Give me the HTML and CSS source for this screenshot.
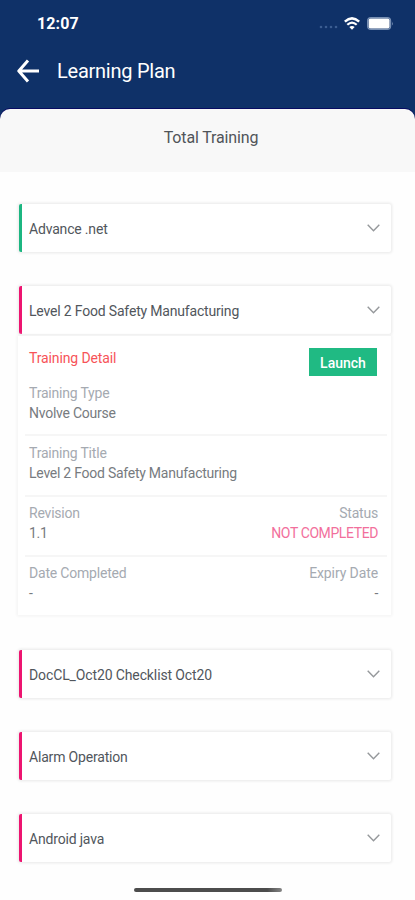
FILE: index.html
```html
<!DOCTYPE html>
<html lang="en">
<head>
<meta charset="utf-8">
<meta name="viewport" content="width=device-width, initial-scale=1">
<title>Learning Plan</title>
<link rel="stylesheet" href="styles.css">
</head>
<body>
<div class="app">
  <header class="header">
    <div class="status-bar">
      <span class="time">12:07</span>
      <div class="status-icons">
        <svg class="signal" width="19" height="4" viewBox="0 0 19 4"><g fill="#3b5d91"><circle cx="2" cy="2" r="1.3"/><circle cx="7" cy="2" r="1.3"/><circle cx="12" cy="2" r="1.3"/><circle cx="17" cy="2" r="1.3"/></g></svg>
        <svg class="wifi" width="16" height="13" viewBox="0 0 16 13"><g fill="none" stroke="#fff"><path d="M.8 4.7Q8-2 15.2 4.7" stroke-width="2.5"/><path d="M3.3 7.8Q8 3.4 12.7 7.8" stroke-width="2.2"/></g><path d="M5.3 10Q8 7.8 10.7 10L8 12.7Z" fill="#fff"/></svg>
        <svg class="battery" width="27" height="13" viewBox="0 0 27 13"><rect x=".6" y=".6" width="23" height="11.8" rx="3.4" fill="none" stroke="#7890b4" stroke-width="1.2"/><rect x="1.6" y="1.6" width="21" height="9.8" rx="2" fill="#fff"/><path d="M25 4.5q1.5 2 0 4z" fill="#7890b4"/></svg>
      </div>
    </div>
    <div class="nav">
      <svg class="back" width="23" height="24" viewBox="0 0 23 24"><path d="M22 12H2M11 1.5L1.8 12L11 22.5" fill="none" stroke="#fff" stroke-width="3" stroke-linejoin="round"/></svg>
      <h1 class="title">Learning Plan</h1>
    </div>
  </header>
  <div class="summary"><span>Total Training</span></div>
  <main class="list">
    <section class="card done"><h2>Advance .net</h2><svg class="chevron" viewBox="0 0 13 8"><path d="M.7.8L6.5 6.8L12.3.8"/></svg></section>
    <div class="group">
      <section class="card"><h2>Level 2 Food Safety Manufacturing</h2><svg class="chevron" viewBox="0 0 13 8"><path d="M.7.8L6.5 6.8L12.3.8"/></svg></section>
      <div class="detail">
        <div class="row first">
          <div class="top"><h3>Training Detail</h3><button class="launch">Launch</button></div>
          <div class="label">Training Type</div>
          <div class="value">Nvolve Course</div>
        </div>
        <div class="row">
          <div><div class="label">Training Title</div><div class="value">Level 2 Food Safety Manufacturing</div></div>
        </div>
        <div class="row">
          <div><div class="label">Revision</div><div class="value">1.1</div></div>
          <div class="right"><div class="label">Status</div><div class="value pink">NOT COMPLETED</div></div>
        </div>
        <div class="row">
          <div><div class="label">Date Completed</div><div class="value">-</div></div>
          <div class="right"><div class="label expiry">Expiry Date</div><div class="value">-</div></div>
        </div>
      </div>
    </div>
    <section class="card"><h2 class="roomy">DocCL_Oct20 Checklist Oct20</h2><svg class="chevron" viewBox="0 0 13 8"><path d="M.7.8L6.5 6.8L12.3.8"/></svg></section>
    <section class="card"><h2>Alarm Operation</h2><svg class="chevron" viewBox="0 0 13 8"><path d="M.7.8L6.5 6.8L12.3.8"/></svg></section>
    <section class="card"><h2>Android java</h2><svg class="chevron" viewBox="0 0 13 8"><path d="M.7.8L6.5 6.8L12.3.8"/></svg></section>
  </main>
  <div class="home-bar"></div>
</div>
</body>
</html>
```
FILE: styles.css
```css
* { box-sizing: border-box; }
body { margin: 0; background: #0f3168; font-family: Roboto, "Liberation Sans", sans-serif; }
h1, h2, h3 { margin: 0; font-weight: 400; }
svg { display: block; flex: none; }
.app { width: 415px; height: 900px; overflow: hidden; display: flex; flex-direction: column; background: linear-gradient(#0f3168 140px, #fefefe 140px); }
.header { height: 122px; margin-bottom: -13px; background: #0f3168; color: #fff; flex: none; }
.status-bar { height: 46px; padding: 0 21px 0 37px; display: flex; justify-content: space-between; align-items: center; }
.time { font-size: 16px; font-weight: 700; letter-spacing: .1px; }
.status-icons { display: flex; align-items: center; }
.signal { margin-top: 8px; margin-right: 6px; }
.wifi { margin-right: 7px; }
.nav { display: flex; align-items: center; height: 50px; padding-left: 17px; gap: 17px; }
.title { font-size: 20px; line-height: 24px; letter-spacing: -.25px; }
.summary { height: 63px; flex: none; background: #f8f8f8; border-radius: 10px 10px 0 0; display: flex; justify-content: center; padding: 18px 0 0 7px; font-size: 16px; line-height: 22px; letter-spacing: -.15px; color: #505459; box-shadow: 0 -1px #080b62; }
.list { padding: 32px 24px 0 19px; display: flex; flex-direction: column; gap: 34.3px; }
.card { height: 48px; display: flex; align-items: center; justify-content: space-between; padding: 2px 11px 0 7px; border-left: 3px solid #ed1470; border-radius: 2px; background: #fff; box-shadow: 0 0 3px 1px #e8e8e8; }
.card.done { border-left-color: #1cb681; }
.card h2 { font-size: 14px; line-height: 20px; letter-spacing: -.18px; color: #51565c; white-space: nowrap; }
.card h2.roomy { letter-spacing: -.12px; }
.chevron { width: 13px; height: 8px; margin-bottom: 2px; fill: none; stroke: #95989b; stroke-width: 1.4; }
.detail { height: 279px; margin: 2px 0 0 -1px; padding: 0 4px 0 7px; background: #fff; box-shadow: 0 0 3px 1px #f2f2f2; }
.row { height: 60.3px; padding: 6.5px 9px 0 4px; display: flex; justify-content: space-between; border-bottom: 2px solid #f6f6f6; }
.row:last-child { border: 0; }
.row.first { display: block; height: 100px; padding-top: 12px; }
.top { display: flex; align-items: flex-start; justify-content: space-between; height: 35px; }
.top h3 { font-size: 14px; line-height: 20px; letter-spacing: -.12px; color: #f75358; }
.launch { width: 68px; height: 28px; margin-right: 1px; padding: 2px 0 0; border: 0; background: #20ba83; color: #fff; font: 500 14px/20px Roboto, sans-serif; }
.label { font-size: 14px; line-height: 20px; letter-spacing: -.2px; color: #a5aab1; white-space: nowrap; }
.value { font-size: 14px; line-height: 20px; letter-spacing: -.25px; color: #777b80; white-space: nowrap; }
.right { text-align: right; }
.label.expiry { letter-spacing: -.1px; }
.value.pink { letter-spacing: -.4px; color: #f26f9c; }
.home-bar { width: 148px; height: 4px; margin: 26px auto 0 134px; border-radius: 2px; background: linear-gradient(90deg, #4c4c4c 90%, #858585); flex: none; }
```
